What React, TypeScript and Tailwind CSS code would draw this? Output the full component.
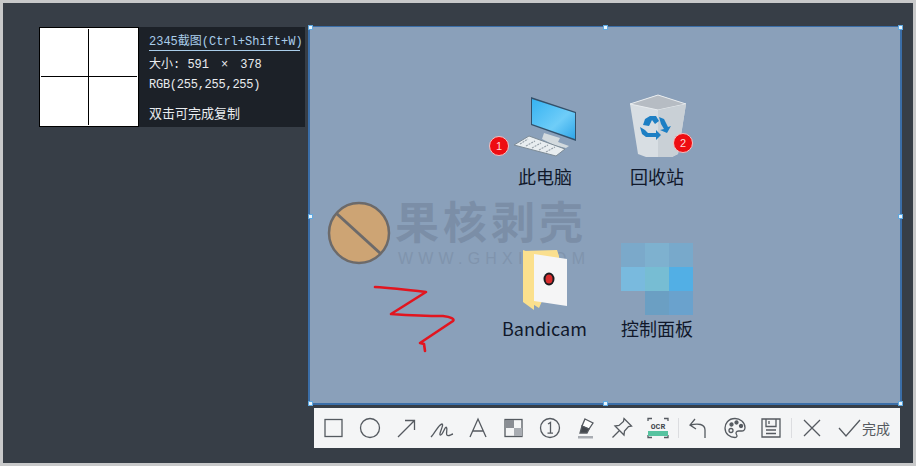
const cjk = "font-['Noto_Sans_CJK_SC',sans-serif]"

function Handle({ className }: { className: string }) {
  return <div className={`absolute w-[5px] h-[5px] bg-[#e8f4fc] border border-[#5fa8e0] ${className}`} />
}

function ToolIcon({ children, w = 24 }: { children: React.ReactNode; w?: number }) {
  return (
    <svg width={w} height="24" viewBox={`0 0 ${w} 24`} fill="none" stroke="#555a60" strokeWidth="1.3" className="shrink-0">
      {children}
    </svg>
  )
}

function Toolbar() {
  return (
    <div className="ml-[6px] mt-[3px] w-[586px] h-[40px] bg-[#f4f5f6] flex items-center pl-[8px]">
      <div className="flex items-center gap-[12px]">
        <ToolIcon>
          <rect x="3" y="3.5" width="17" height="17" />
        </ToolIcon>
        <ToolIcon>
          <circle cx="12" cy="12" r="9.5" />
        </ToolIcon>
        <ToolIcon>
          <path d="M4 21 L20 5 M11 4.5 H20.5 V14" />
        </ToolIcon>
        <ToolIcon>
          <path d="M1 21 C5 17 9 8 12 8 C14.5 8.5 8 19 10.5 19 C13 19 15 9.5 16.5 11.5 C18 13.5 15 18.5 17.5 19.5 C19 20 21 18.5 23 18" />
        </ToolIcon>
        <ToolIcon>
          <path d="M4 21 L12 3 L20 21 M7 15 H17" />
        </ToolIcon>
        <ToolIcon>
          <rect x="3" y="3.5" width="17" height="17" />
          <rect x="4" y="4" width="8" height="8" fill="#8a8e94" stroke="none" />
          <rect x="12" y="12" width="8" height="8" fill="#a8acb2" stroke="none" />
        </ToolIcon>
        <ToolIcon>
          <circle cx="12" cy="12" r="9.5" />
          <path d="M10 8 L12.5 6.5 V17 M9.5 17.2 H15" />
        </ToolIcon>
        <ToolIcon>
          <path d="M11 3 L19 7 L15 13 L8 10 Z" fill="#fff" />
          <path d="M8 10 L15 13 L13 17 H6 Z" fill="#44484e" />
          <rect x="4" y="20" width="15" height="2.5" fill="#a8acb2" stroke="none" />
        </ToolIcon>
        <ToolIcon>
          <path d="M14 2.5 L21.5 10 L18.5 10.5 L14.5 15 L14 19 L5 10 L9 9.5 L13.5 5.5 Z M9 15 L2.5 21.5" />
        </ToolIcon>
        <ToolIcon>
          <path d="M2 5 V2.5 H6 M18 2.5 H22 V5 M2 19 V21.5 H6 M18 21.5 H22 V19" />
          <rect x="2" y="15" width="20" height="5" fill="#56c3a0" stroke="none" />
          <text x="12" y="12.5" fontSize="8" fontFamily="Liberation Mono" textAnchor="middle" fill="#44484e" stroke="none" fontWeight="700">OCR</text>
        </ToolIcon>
      </div>
      <div className="w-px h-[20px] bg-[#dcdde0] ml-[8px] mr-[8px]" />
      <div className="flex items-center gap-[12px]">
        <ToolIcon>
          <path d="M7 3 L2 9 L8 13 M2.5 9 C10 7 17 8 17 14 V22" transform="translate(1 0)" />
        </ToolIcon>
        <ToolIcon>
          <path d="M12 2.5 C5 2.5 2 8 2 12 C2 18 7 21.5 12 21.5 C14 21.5 14.5 20 13.5 18.5 C12.5 17 13 15 15.5 15 H18.5 C21 15 22 13 22 11.5 C22 6 17 2.5 12 2.5 Z" />
          <circle cx="8" cy="14.5" r="2" />
          <circle cx="8.5" cy="8.5" r="1.5" fill="#555a60" />
          <circle cx="13.5" cy="6.5" r="1.5" fill="#555a60" />
          <circle cx="18" cy="10" r="1.5" fill="#555a60" />
        </ToolIcon>
        <ToolIcon>
          <path d="M3 3 H21 V21 H3 Z M7 3 V10.5 H17 V3 M7 14 H17 M7 17.5 H17" />
          <path d="M10 5 V8" />
        </ToolIcon>
      </div>
      <div className="w-px h-[20px] bg-[#dcdde0] ml-[8px] mr-[8px]" />
      <ToolIcon>
        <path d="M4 4 L20 20 M20 4 L4 20" />
      </ToolIcon>
      <div className="ml-[13px] flex items-center gap-[1px]">
        <ToolIcon>
          <path d="M2 12 L9 20 L23 4" />
        </ToolIcon>
        <span className={`${cjk} text-[14px] text-[#555a60] leading-none`}>完成</span>
      </div>
    </div>
  )
}

function Badge({ n, className }: { n: number; className: string }) {
  return (
    <div className={`absolute w-[20px] h-[20px] rounded-full bg-[#ee0d12] border border-[#f8c0c0] flex items-center justify-center text-[11px] text-[#ffd8d8] font-['Liberation_Sans',sans-serif] ${className}`}>
      {n}
    </div>
  )
}

function DesktopLabel({ text, className }: { text: string; className: string }) {
  return <div className={`absolute text-[18px] leading-none text-[#10182a] whitespace-nowrap ${cjk} ${className}`}>{text}</div>
}

function Computer() {
  return (
    <svg className="absolute left-[204px] top-[69px]" width="64" height="62" viewBox="0 0 64 62">
      <defs>
        <linearGradient id="scr" x1="0" y1="0" x2="1" y2="1">
          <stop offset="0" stopColor="#35b2f2" />
          <stop offset="0.6" stopColor="#6fcdf8" />
          <stop offset="1" stopColor="#2ea5e8" />
        </linearGradient>
      </defs>
      <path d="M17 1 L62 16 V45 L17 29 Z" fill="#33506a" />
      <path d="M18 3 L61 17 V43 L18 28 Z" fill="url(#scr)" />
      <path d="M30 37 L46 42 L44 46 L55 50 L52 52 L40 49 L28 43 Z" fill="#d3dade" />
      <path d="M0 49 L15 40 L51 53 L42 60 Z" fill="#e8edf0" stroke="#7d8b96" strokeWidth="1" />
      <path d="M6 48 L14 43 M12 50 L21 45 M18 52 L27 47 M25 54 L34 49 M32 56 L41 51" stroke="#9aa4ac" strokeWidth="1.2" strokeDasharray="2 1" />
    </svg>
  )
}

function RecycleBin() {
  return (
    <svg className="absolute left-[318px] top-[67px]" width="60" height="64" viewBox="0 0 60 64">
      <path d="M2 10 L30 1 L58 10 L50 60 L44 63 H18 L10 60 Z" fill="#d8dee3" />
      <path d="M2 10 L30 1 L58 10 L30 16 Z" fill="#b6bcc3" stroke="#e8ecef" />
      <path d="M30 16 L58 10 L50 60 L44 63 H30 Z" fill="#c9d0d6" />
      <g fill="#1d7fc4">
        <path d="M17 25 L22 22 L28 22 L31 27 L27 30 L24 26 L21 32 L15 31 Z" />
        <path d="M31 23 L36 25 L40 33 L43 32 L39 39 L32 36 L36 35 L33 30 Z" />
        <path d="M12 33 L17 36 L20 39 L28 39 L28 36 L33 41 L28 46 L28 43 L18 43 L14 40 Z" />
      </g>
    </svg>
  )
}

function Watermark() {
  return (
    <>
      <svg className="absolute left-[17px] top-[173px]" width="64" height="66" viewBox="0 0 64 66">
        <circle cx="32" cy="33" r="30" fill="#cda474" stroke="#6c6a6a" strokeWidth="2.5" />
        <path d="M9 13 L54 54" stroke="#6c6a6a" strokeWidth="3" />
      </svg>
      <div className={`absolute left-[85px] top-[171px] text-[44px] leading-none font-bold tracking-[4px] text-[#7b8ea7] whitespace-nowrap ${cjk}`}>果核剥壳</div>
      <div className="absolute left-[88px] top-[224px] text-[16px] leading-none tracking-[5.2px] text-[#8094ad] whitespace-nowrap font-['Liberation_Sans',sans-serif]">WWW.GHXI.COM</div>
    </>
  )
}

function Folder() {
  return (
    <svg className="absolute left-[211px] top-[221px]" width="47" height="64" viewBox="0 0 47 64">
      <path d="M2 3 L36 2 L38 8 V14 L18 60 L2 50 Z" fill="#fadf8f" />
      <path d="M13 6 L46 11 V58 L13 53 Z" fill="#f5f5f6" />
      <path d="M13 6 V62 L2 54 V2 Z" fill="#fbe08d" />
      <ellipse cx="28" cy="31" rx="5.5" ry="6.5" fill="#1b1b1f" />
      <ellipse cx="28" cy="31" rx="3.5" ry="4.5" fill="#d92d2d" />
    </svg>
  )
}

function Mosaic() {
  const cells = [
    "#7ba9ca", "#7eb1cf", "#78a9cb",
    "#79bade", "#77bdd3", "#52afe5",
    "#8aa0ba", "#6b9fc3", "#6aa2cd",
  ]
  return (
    <div className="absolute left-[311px] top-[216px] w-[72px] h-[72px] grid grid-cols-3 grid-rows-3">
      {cells.map((c, i) => (
        <div key={i} style={{ backgroundColor: c }} />
      ))}
    </div>
  )
}

function Scribble() {
  return (
    <svg className="absolute left-[61px] top-[257px]" width="90" height="70" viewBox="0 0 90 70" fill="none" stroke="#e2151f" strokeWidth="2.6" strokeLinejoin="round" strokeLinecap="round">
      <path d="M4 3 C20 4 38 6 55 8 L20 30 C35 31 55 32 72 32 C80 33 84 35 82 37 L49 59 L53 60 L54 67" />
    </svg>
  )
}

export default function App() {
  return (
    <div className="w-[916px] h-[466px] bg-[#c8c9ca] pl-[3px] pt-[3px] pr-[3px] pb-[3px] overflow-hidden">
      <div className="w-[910px] h-[460px] bg-[#373e47] flex items-start">
        {/* Magnifier and info */}
        <div className="ml-[36px] mt-[24px] w-[269px] flex shrink-0">
          <div className="w-[266px] h-[100px] flex">
            <div className="w-[100px] h-[100px] bg-white border border-black relative shrink-0">
              <div className="absolute left-[48px] top-[1px] bottom-[1px] w-px bg-black" />
              <div className="absolute top-[48px] left-[1px] right-[1px] h-px bg-black" />
            </div>
            <div className="flex-1 bg-[#1c2128] pl-[10px] pt-[9px] text-[12px] leading-none text-[#e9ecef] font-['Liberation_Mono','Noto_Sans_CJK_SC',monospace]">
              <div className="w-[151px] h-[15px] border-b border-[#a9cdea] text-[#a9cdea] whitespace-nowrap">2345截图(Ctrl+Shift+W)</div>
              <div className="mt-[8px] h-[14px] whitespace-pre">
                大小: 591<span className="mx-[12px]">×</span>378
              </div>
              <div className="mt-[6px] whitespace-nowrap tracking-[-0.25px]">RGB(255,255,255)</div>
              <div className={`mt-[15px] ${cjk} text-[13px]`}>双击可完成复制</div>
            </div>
          </div>
        </div>

        {/* Selection and toolbar */}
        <div className="mt-[23px] flex flex-col shrink-0">
          <div className="relative w-[594px] h-[379px] bg-[#8aa0ba] border-2 border-[#3b6ea8] border-t-1">
            <Watermark />
            <Computer />
            <RecycleBin />
            <Badge n={1} className="left-[179px] top-[109px]" />
            <Badge n={2} className="left-[363px] top-[106px]" />
            <DesktopLabel text="此电脑" className="left-[208px] top-[140px]" />
            <DesktopLabel text="回收站" className="left-[320px] top-[140px]" />
            <Folder />
            <Mosaic />
            <DesktopLabel text="Bandicam" className="left-[192px] top-[292px]" />
            <DesktopLabel text="控制面板" className="left-[311px] top-[292px]" />
            <Scribble />
            <Handle className="-left-[2px] -top-[2px]" />
            <Handle className="left-[293px] -top-[2px]" />
            <Handle className="right-[-3px] -top-[2px]" />
            <Handle className="-left-[2px] top-[187px]" />
            <Handle className="right-[-3px] top-[187px]" />
            <Handle className="-left-[2px] -bottom-[3px]" />
            <Handle className="left-[293px] -bottom-[3px]" />
            <Handle className="right-[-3px] -bottom-[3px]" />
          </div>
          <Toolbar />
        </div>
      </div>
    </div>
  )
}
